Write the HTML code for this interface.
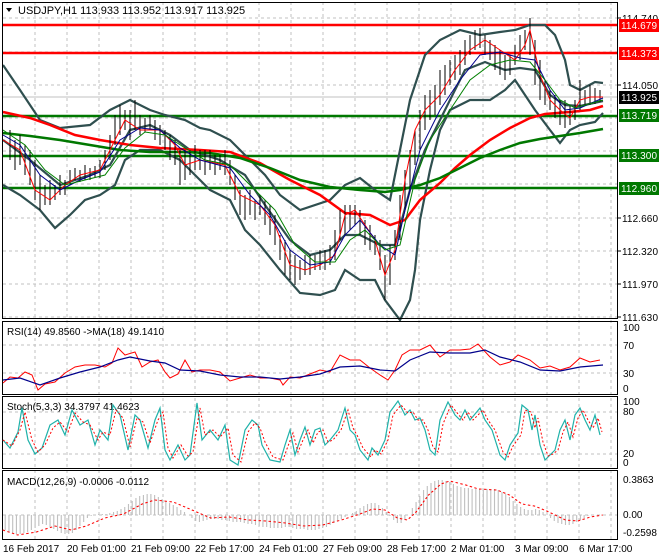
<!DOCTYPE html>
<html><head><meta charset="utf-8"><style>
html,body{margin:0;padding:0;background:#fff;}
svg{display:block;font-family:"Liberation Sans",sans-serif;}
</style></head><body>
<svg width="660" height="560" viewBox="0 0 660 560" xmlns="http://www.w3.org/2000/svg">
<rect width="660" height="560" fill="#fff"/>
<g stroke="#c0c0c0" stroke-dasharray="3,3" stroke-width="1">
<line x1="35" y1="2" x2="35" y2="540"/><line x1="67" y1="2" x2="67" y2="540"/><line x1="99" y1="2" x2="99" y2="540"/><line x1="131" y1="2" x2="131" y2="540"/><line x1="163" y1="2" x2="163" y2="540"/><line x1="195" y1="2" x2="195" y2="540"/><line x1="227" y1="2" x2="227" y2="540"/><line x1="259" y1="2" x2="259" y2="540"/><line x1="291" y1="2" x2="291" y2="540"/><line x1="323" y1="2" x2="323" y2="540"/><line x1="355" y1="2" x2="355" y2="540"/><line x1="387" y1="2" x2="387" y2="540"/><line x1="419" y1="2" x2="419" y2="540"/><line x1="451" y1="2" x2="451" y2="540"/><line x1="483" y1="2" x2="483" y2="540"/><line x1="515" y1="2" x2="515" y2="540"/><line x1="547" y1="2" x2="547" y2="540"/><line x1="579" y1="2" x2="579" y2="540"/><line x1="611" y1="2" x2="611" y2="540"/>
<line x1="3" y1="18" x2="617" y2="18"/><line x1="3" y1="52" x2="617" y2="52"/><line x1="3" y1="85" x2="617" y2="85"/><line x1="3" y1="118" x2="617" y2="118"/><line x1="3" y1="151" x2="617" y2="151"/><line x1="3" y1="184" x2="617" y2="184"/><line x1="3" y1="218" x2="617" y2="218"/><line x1="3" y1="251" x2="617" y2="251"/><line x1="3" y1="284" x2="617" y2="284"/><line x1="3" y1="317" x2="617" y2="317"/>
<line x1="3" y1="345" x2="617" y2="345"/><line x1="3" y1="373" x2="617" y2="373"/>
<line x1="3" y1="412" x2="617" y2="412"/><line x1="3" y1="454" x2="617" y2="454"/>
<line x1="3" y1="515" x2="617" y2="515"/>
</g>
<line x1="3" y1="97" x2="617" y2="97" stroke="#c0c0c0"/>
<g stroke-width="2.5">
<line x1="3" y1="25" x2="617" y2="25" stroke="#ff0000"/>
<line x1="3" y1="53" x2="617" y2="53" stroke="#ff0000"/>
<line x1="3" y1="116" x2="617" y2="116" stroke="#007800"/>
<line x1="3" y1="156" x2="617" y2="156" stroke="#007800"/>
<line x1="3" y1="188" x2="617" y2="188" stroke="#007800"/>
</g>
<g fill="none" stroke="#2f4f4f" stroke-width="2.2">
<polyline points="3,65 20,90 40,120 60,128 90,125 110,110 130,100 150,110 165,115 185,120 200,128 210,130 230,140 250,160 265,175 280,195 300,210 330,200 345,185 360,178 375,190 390,200 400,150 410,100 425,55 440,40 460,30 480,35 500,32 515,30 530,25 545,25 555,35 565,60 570,85 580,90 595,82 603,83"/>
<polyline points="3,185 20,195 40,210 55,228 70,215 85,200 100,195 115,185 125,160 140,150 160,150 180,160 195,175 210,190 230,200 245,230 260,245 280,270 300,293 320,295 335,290 345,270 360,280 375,280 385,300 400,320 410,300 415,270 420,220 430,170 440,130 450,110 470,100 490,100 505,90 515,80 525,95 535,110 550,130 560,143 570,130 580,125 595,122 603,113"/>
<polyline points="3,140 30,160 60,185 90,175 110,165 130,130 150,125 170,135 190,150 220,160 245,175 265,205 290,240 310,255 330,250 345,235 360,235 380,245 395,245 410,190 425,150 445,110 465,70 485,62 505,70 520,68 535,70 550,95 565,105 580,106 603,101"/>
</g>
<polyline fill="none" stroke="#ff0000" stroke-width="2.5" points="3,112 30,118 50,125 75,135 100,140 130,145 160,148 200,150 230,152 260,163 290,180 320,195 345,213 370,215 390,225 405,220 420,200 440,183 455,168 470,155 490,140 510,128 530,118 545,114 570,112 590,110 603,106"/>
<polyline fill="none" stroke="#007800" stroke-width="2.5" points="3,133 30,136 60,140 90,145 120,150 150,152 180,152 210,153 240,158 270,168 300,180 330,187 360,190 385,192 400,190 420,185 440,178 460,168 480,158 500,150 520,143 540,139 560,136 580,133 603,129"/>
<g stroke="#000" stroke-width="1">
<path d="M10,130V160M15,140V170M20,135V165M25,145V175M30,150V185M35,160V200M40,175V210M45,185V205M50,180V205M55,185V200M60,175V195M65,180V195M70,170V185M75,168V180M80,170V182M85,165V180M90,168V180M95,166V178M100,160V178M105,150V170M110,135V160M115,115V145M120,105V135M125,110V130M130,110V140M135,100V130M140,115V135M145,118V132M150,115V130M155,120V140M160,125V145M165,130V150M170,135V160M175,140V165M180,150V185M185,150V180M190,150V175M195,145V170M200,150V170M205,150V175M210,150V170M215,155V175M220,155V170M225,150V175M230,160V185M235,175V200M240,190V215M245,195V220M250,190V215M255,200V220M260,195V215M265,200V225M270,205V235M275,215V245M280,235V260M285,240V275M290,250V280M295,255V285M300,260V280M305,255V275M310,255V275M315,255V270M320,250V270M325,250V270M330,245V265M335,230V260M340,210V240M345,205V235M350,205V230M355,205V225M360,210V235M365,220V245M370,225V250M375,235V255M380,240V270M385,255V300M390,245V285M395,230V260M400,195V240M405,170V210M410,150V190M415,130V165M420,110V150M425,95V130M430,90V120M435,85V115M440,70V105M445,65V95M450,60V85M455,55V80M460,50V75M465,40V65M470,35V55M475,30V50M480,28V48M485,35V55M490,40V60M495,45V70M500,50V75M505,55V80M510,55V75M515,45V65M520,35V60M525,30V50M530,18V55M535,40V85M540,60V100M545,80V105M550,90V110M555,95V118M560,100V125M565,100V128M570,105V125M575,100V120M580,80V110M585,90V105M590,85V105M595,88V104M600,90V102"/>
</g>
<polyline fill="none" stroke="#ff0000" stroke-width="1" points="3,140 20,150 35,190 50,200 65,185 80,175 100,170 115,140 125,120 140,130 160,130 175,145 185,165 200,160 225,165 240,195 260,205 275,225 290,265 305,270 320,265 335,255 345,215 355,210 365,225 375,240 385,275 395,250 405,180 415,130 425,110 440,95 455,70 470,50 485,40 500,50 515,60 525,45 530,30 540,75 550,100 560,110 570,118 580,100 590,97 603,97"/>
<polyline fill="none" stroke="#00008b" stroke-width="1" points="3,135 20,145 40,175 60,190 80,180 100,172 120,140 140,128 160,130 180,148 200,160 230,168 250,195 270,215 290,250 310,265 330,262 345,235 360,220 380,245 395,255 405,210 420,150 440,110 460,80 480,55 500,52 520,58 535,60 550,90 565,110 580,108 603,98"/>
<polyline fill="none" stroke="#008000" stroke-width="1" points="3,130 25,145 45,170 65,185 85,180 105,175 125,148 145,132 165,135 185,148 205,160 230,165 255,190 275,210 295,245 315,262 335,262 350,240 365,230 385,250 400,245 415,180 430,140 450,110 470,80 490,65 510,60 530,62 545,80 560,100 575,108 603,100"/>
<g fill="none" stroke="#000" stroke-width="1">
<rect x="2.5" y="2.5" width="615" height="316"/>
<rect x="2.5" y="321.5" width="615" height="73"/>
<rect x="2.5" y="396.5" width="615" height="72"/>
<rect x="2.5" y="470.5" width="615" height="69"/>
</g>
<path d="M6,8 L12,8 L9,12Z" fill="#000"/>
<text x="18" y="14" font-size="11" fill="#000">USDJPY,H1  113.933 113.952 113.917 113.925</text>
<g font-size="10" fill="#000">
<text x="622" y="22" textLength="36">114.740</text>
<text x="622" y="89" textLength="36">114.050</text>
<text x="622" y="222" textLength="36">112.660</text>
<text x="622" y="255" textLength="36">112.320</text>
<text x="622" y="288" textLength="36">111.970</text>
<text x="622" y="321" textLength="36">111.630</text>
</g>
<g stroke="#000"><line x1="618" y1="18" x2="621" y2="18"/><line x1="618" y1="85" x2="621" y2="85"/><line x1="618" y1="218" x2="621" y2="218"/><line x1="618" y1="251" x2="621" y2="251"/><line x1="618" y1="284" x2="621" y2="284"/><line x1="618" y1="317" x2="621" y2="317"/></g>
<g font-size="10" fill="#fff">
<rect x="619" y="19" width="40" height="13" fill="#ff0000"/><text x="621" y="29" textLength="36">114.679</text>
<rect x="619" y="47" width="40" height="13" fill="#ff0000"/><text x="621" y="57" textLength="36">114.373</text>
<rect x="619" y="91" width="40" height="13" fill="#000"/><text x="621" y="101" textLength="36">113.925</text>
<rect x="619" y="109" width="40" height="13" fill="#007800"/><text x="621" y="119" textLength="36">113.719</text>
<rect x="619" y="149" width="40" height="13" fill="#007800"/><text x="621" y="159" textLength="36">113.300</text>
<rect x="619" y="182" width="40" height="13" fill="#007800"/><text x="621" y="192" textLength="36">112.960</text>
</g>
<text x="7" y="335" font-size="10" fill="#000">RSI(14) 49.8560  -&gt;MA(18) 49.1410</text>
<polyline fill="none" stroke="#ff0000" stroke-width="1" points="3,383 10,377 18,378 25,372 32,375 38,390 45,384 55,382 65,373 75,367 85,365 95,365 105,367 112,363 118,348 125,355 135,352 142,367 150,362 158,360 165,372 170,378 178,374 185,360 192,372 200,370 210,370 220,372 230,381 240,378 250,375 260,378 270,378 280,380 283,385 290,377 300,378 310,374 320,370 330,372 340,355 350,360 360,360 370,368 380,375 388,380 395,370 402,355 410,350 420,350 430,345 440,357 450,350 460,350 470,349 478,344 490,357 500,365 510,362 518,355 530,360 540,368 550,366 560,370 570,367 580,358 590,362 600,360"/>
<polyline fill="none" stroke="#00008b" stroke-width="1.2" points="3,380 20,378 40,385 60,378 80,372 100,367 118,360 130,357 150,361 165,363 180,370 200,371 220,375 240,377 260,377 280,379 300,377 320,374 340,367 360,366 380,370 395,371 410,360 430,352 450,353 470,353 485,350 500,357 520,362 540,370 560,371 580,367 603,365"/>
<g font-size="10" fill="#000"><text x="623" y="331">100</text><text x="623" y="349">70</text><text x="623" y="377">30</text><text x="623" y="392">0</text></g>
<text x="7" y="410" font-size="10" fill="#000">Stoch(5,3,3) 34.3797 41.4623</text>
<polyline fill="none" stroke="#20b2aa" stroke-width="1.2" points="3,440 10,448 18,432 22,408 28,440 35,454 42,448 50,425 58,420 65,435 72,410 80,425 88,420 95,445 100,430 108,440 113,405 120,415 128,450 135,415 140,420 148,448 155,420 160,408 165,450 170,460 178,445 185,460 190,455 197,403 202,440 210,430 218,440 225,425 230,460 238,465 245,430 252,420 258,425 262,445 270,460 280,462 285,445 290,430 295,455 300,440 305,427 310,445 315,430 320,428 325,445 330,440 338,430 345,408 350,430 355,435 360,450 368,460 372,448 378,455 385,440 390,412 398,401 405,415 410,410 415,420 420,418 425,430 430,450 435,455 440,420 448,402 455,415 460,420 465,410 470,420 480,408 485,420 492,430 500,455 505,460 510,445 518,433 522,405 528,410 532,430 535,415 540,445 545,460 550,455 555,450 560,430 565,420 570,440 575,415 580,408 585,420 590,430 595,415 600,435"/>
<polyline fill="none" stroke="#ff0000" stroke-width="1" stroke-dasharray="2,2" points="3,440 12,446 20,430 25,412 32,440 38,452 45,445 53,428 60,422 68,432 75,413 83,422 90,425 98,440 103,432 110,435 116,410 123,418 130,447 137,418 143,422 150,443 158,420 163,412 168,448 173,458 181,445 188,456 193,452 200,408 205,435 213,430 220,437 228,428 233,455 241,462 248,432 255,423 260,428 265,442 273,457 283,460 288,446 293,433 298,452 303,440 308,430 313,443 318,432 323,430 328,442 333,440 341,430 348,410 353,428 358,437 363,448 371,457 375,450 381,454 388,440 393,415 401,405 408,413 413,412 418,420 423,420 428,430 433,447 438,452 443,424 451,405 458,414 463,420 468,412 473,420 483,410 488,420 495,430 503,452 508,457 513,446 521,435 525,410 531,412 535,428 538,418 543,442 548,456 553,454 558,450 563,432 568,422 573,437 578,418 583,410 588,420 593,428 598,418 602,432"/>
<g font-size="10" fill="#000"><text x="623" y="405">100</text><text x="623" y="415">80</text><text x="623" y="457">20</text><text x="623" y="466">0</text></g>
<text x="7" y="485" font-size="10" fill="#000">MACD(12,26,9) -0.0006 -0.0112</text>
<g transform="matrix(1.245,0,0,1,-1,0)">
<path fill="none" stroke="#c0c0c0" stroke-width="0.9" d="M5,515V530M8,515V532M11,515V533M14,515V534M17,515V534M20,515V533M23,515V532M26,515V530M29,515V528M32,515V526M35,515V524M38,515V525M41,515V527M44,515V529M47,515V531M50,515V533M53,515V534M56,515V534M59,515V533M62,515V530M65,515V526M68,515V522M71,515V518M74,515V516M77,515V515M80,515V514M83,515V514M86,515V514M89,515V513M92,515V512M95,515V511M98,515V509M101,515V507M104,515V504M107,515V501M110,515V498M113,515V496M116,515V495M119,515V494M122,515V494M125,515V495M128,515V497M131,515V499M134,515V501M137,515V503M140,515V505M143,515V507M146,515V510M149,515V512M152,515V515M155,515V518M158,515V521M161,515V522M164,515V521M167,515V520M170,515V519M173,515V519M176,515V519M179,515V520M182,515V520M185,515V521M188,515V522M191,515V522M194,515V522M197,515V523M200,515V524M203,515V524M206,515V525M209,515V526M212,515V527M215,515V527M218,515V528M221,515V528M224,515V528M227,515V528M230,515V527M233,515V527M236,515V528M239,515V529M242,515V529M245,515V529M248,515V530M251,515V530M254,515V530M257,515V529M260,515V528M263,515V527M266,515V525M269,515V523M272,515V521M275,515V519M278,515V517M281,515V515M284,515V513M287,515V511M290,515V508M293,515V506M296,515V504M299,515V503M302,515V503M305,515V505M308,515V508M311,515V512M314,515V516M317,515V520M320,515V523M323,515V523M326,515V520M329,515V515M332,515V508M335,515V502M338,515V496M341,515V490M344,515V486M347,515V483M350,515V481M353,515V480M356,515V480M359,515V481M362,515V482M365,515V484M368,515V486M371,515V487M374,515V488M377,515V488M380,515V489M383,515V489M386,515V489M389,515V489M392,515V489M395,515V489M398,515V489M401,515V490M404,515V492M407,515V494M410,515V497M413,515V501M416,515V504M419,515V507M422,515V509M425,515V510M428,515V510M431,515V509M434,515V510M437,515V512M440,515V515M443,515V518M446,515V521M449,515V523M452,515V524M455,515V525M458,515V525M461,515V524M464,515V522M467,515V520M470,515V518M473,515V516M476,515V515"/>
<polyline fill="none" stroke="#ff0000" stroke-width="1" stroke-dasharray="2,2" points="3,530 15,535 30,532 45,526 58,530 70,526 85,518 100,514 115,504 125,500 140,502 155,510 170,518 185,517 200,520 215,521 230,523 245,526 260,525 275,520 290,514 300,509 310,510 320,518 328,520 335,512 345,495 355,484 362,481 375,485 385,489 400,490 410,495 420,504 430,506 440,511 455,520 465,521 475,517 485,515"/>
</g>
<g font-size="10" fill="#000"><text x="623" y="483">0.3863</text><text x="623" y="518">0.00</text><text x="623" y="536">-0.2598</text></g>
<g font-size="10" fill="#000">
<text x="3" y="552">16 Feb 2017</text><text x="67" y="552">20 Feb 01:00</text><text x="131" y="552">21 Feb 09:00</text><text x="195" y="552">22 Feb 17:00</text><text x="259" y="552">24 Feb 01:00</text><text x="323" y="552">27 Feb 09:00</text><text x="387" y="552">28 Feb 17:00</text><text x="451" y="552">2 Mar 01:00</text><text x="515" y="552">3 Mar 09:00</text><text x="579" y="552">6 Mar 17:00</text>
</g>
</svg>
</body></html>
